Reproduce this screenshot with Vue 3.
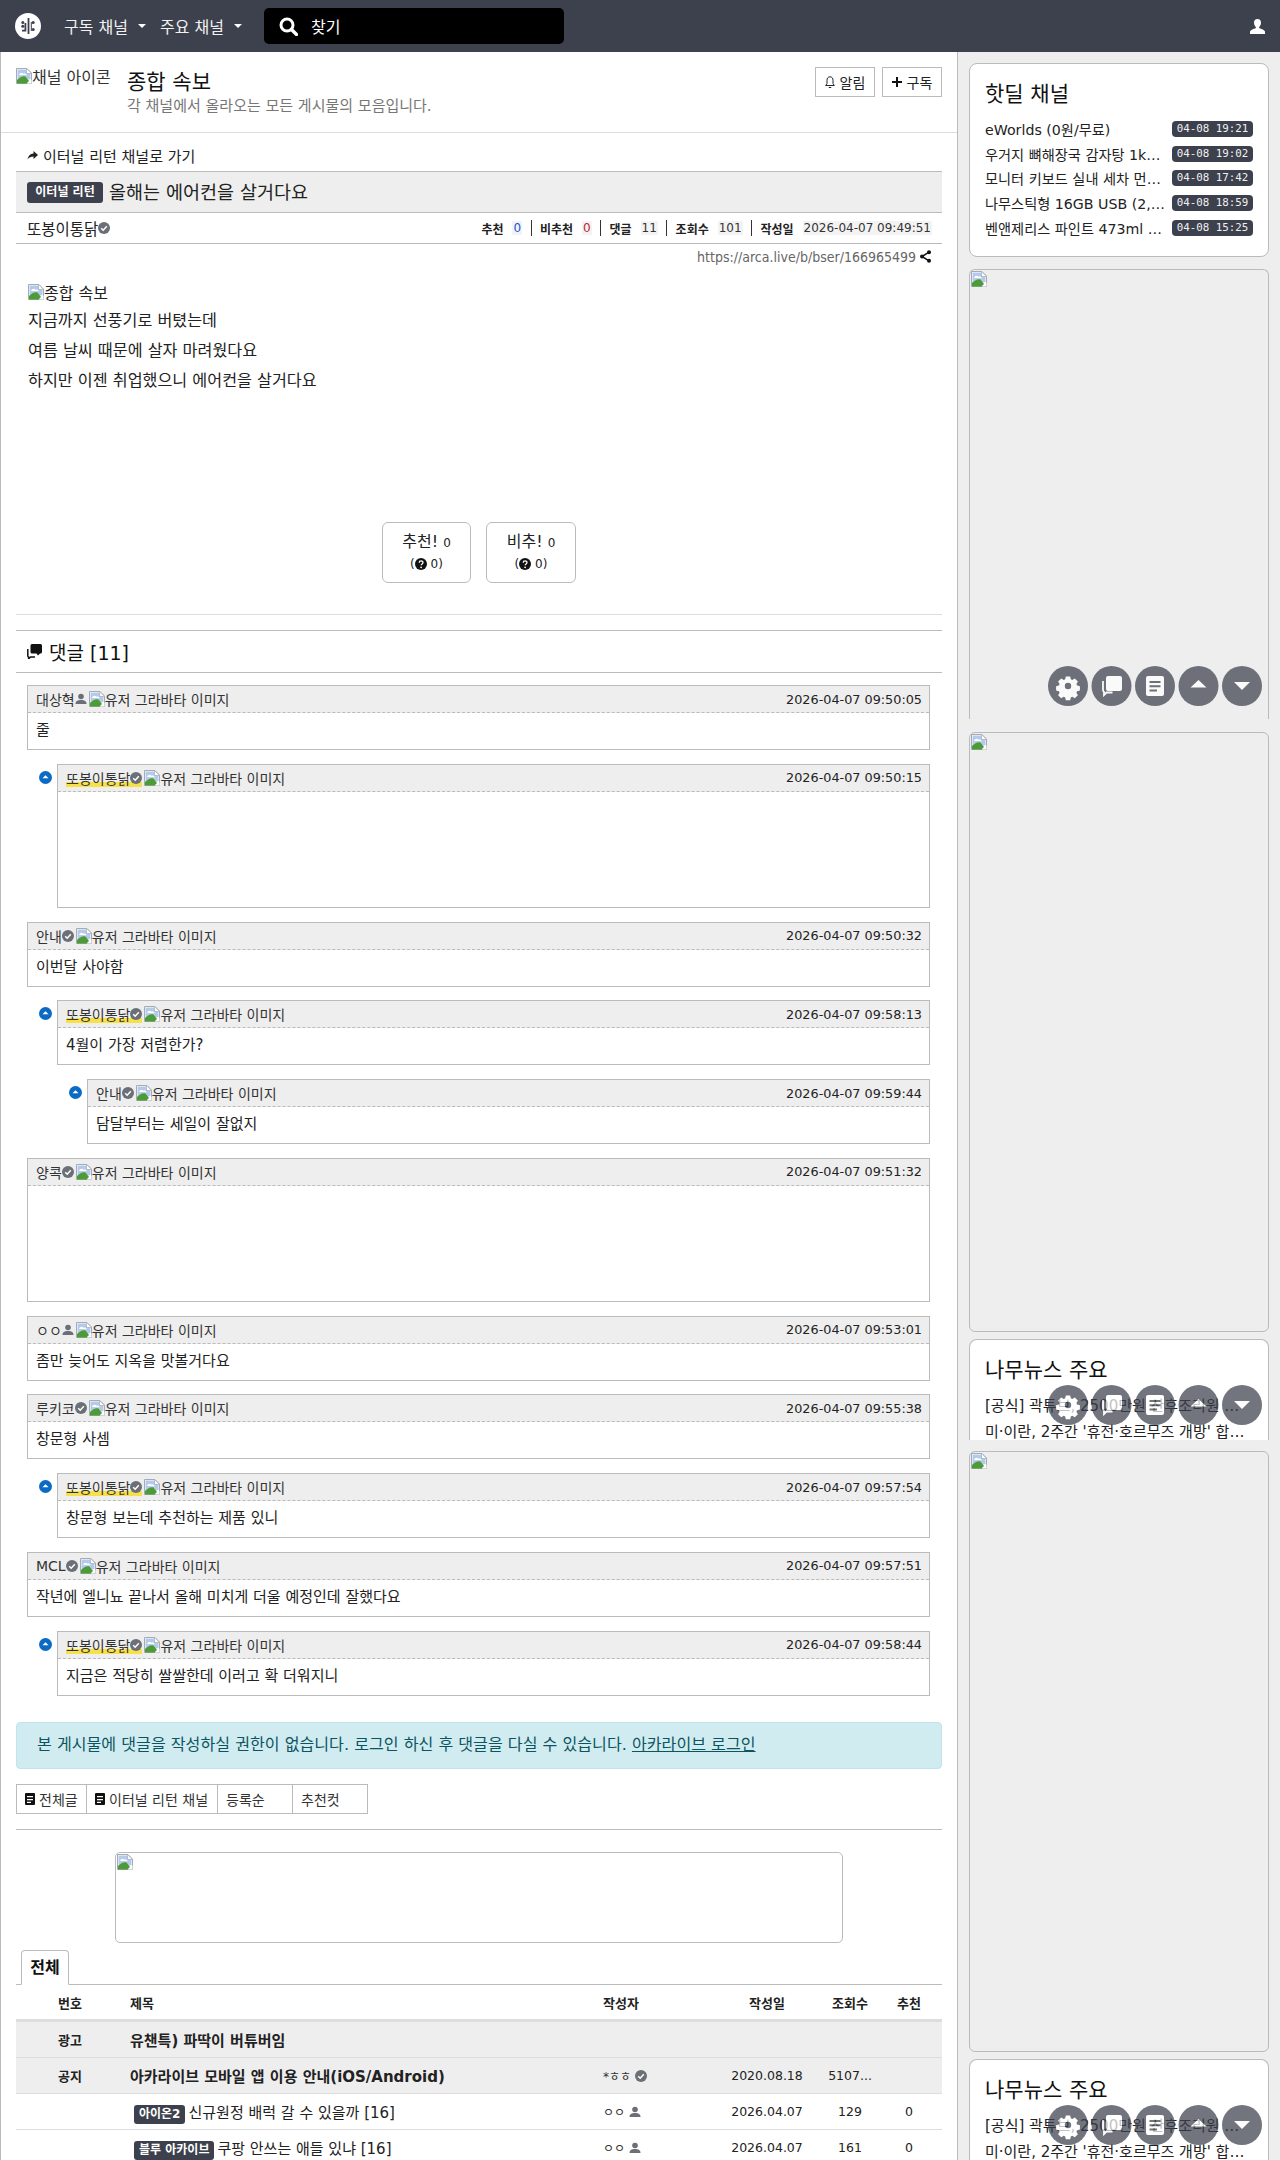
<template>
  <div class="page">
    <svg class="defs" width="0" height="0">
      <symbol id="broken" viewBox="0 0 16 16">
        <path d="M.5.500h10.500l4.500 4.500v10.500h-15z" fill="#fff" stroke="#a3abb5" stroke-width="1"/>
        <path d="M1.500 1.500h8.700l4.300 4.300v5.200l-13 3z" fill="#b4caec"/>
        <path d="M3 7c1-2.500 3-3 4.500-1.200 1.500-.5 2.800 0 3.300 1.400z" fill="#fff"/>
        <path d="M1 15.500v-3.500c3-3.200 6-4.500 8.500-3.500l3.500 4.500-2.500 2.500z" fill="#4d9b37"/>
        <path d="M10.500.500v5h5z" fill="#fff" stroke="#a3abb5" stroke-width=".7"/>
        <path d="M15.500 11.500l-4.500 4h4.500z" fill="#fff"/>
      </symbol>
      <symbol id="check" viewBox="0 0 12 12">
        <circle cx="6" cy="6" r="6" fill="#6c6f78"/>
        <path d="M3.200 6.200l2 2 3.600-4" fill="none" stroke="#fff" stroke-width="1.500"/>
      </symbol>
      <symbol id="person" viewBox="0 0 12 12">
        <circle cx="6" cy="3.500" r="2.800" fill="#6c6f78"/>
        <path d="M.5 11c0-3 2-4 5.500-4s5.500 1 5.500 4z" fill="#6c6f78"/>
      </symbol>
      <symbol id="listicon" viewBox="0 0 10 12">
        <path d="M1 0h8a1 1 0 0 1 1 1v10a1 1 0 0 1-1 1H1a1 1 0 0 1-1-1V1a1 1 0 0 1 1-1zm1 3v1.300h6V3zm0 3v1.300h6V6zm0 2.700V10h4V8.700z" fill="#111" fill-rule="evenodd"/>
      </symbol>
      <symbol id="help" viewBox="0 0 12 12">
        <circle cx="6" cy="6" r="6" fill="#111"/>
        <path d="M4.200 4.700c0-2.300 3.800-2.300 3.800-.1 0 1.400-1.900 1.300-1.900 2.700" fill="none" stroke="#fff" stroke-width="1.300"/>
        <circle cx="6.100" cy="9.300" r=".9" fill="#fff"/>
      </symbol>
      <symbol id="fabs" viewBox="0 0 214 40">
        <circle cx="20" cy="20" r="20" fill="#3d414d"/>
        <g fill="#fff" transform="translate(20 20)">
          <path d="M-2.200-9.500h4.400l.6 2.800 1.500.7 2.500-1.500 3.100 3.100-1.500 2.500.7 1.500 2.800.6v4.400l-2.800.6-.7 1.500 1.500 2.500-3.100 3.100-2.500-1.500-1.500.7-.6 2.800h-4.400l-.6-2.800-1.500-.7-2.500 1.500-3.100-3.100 1.500-2.500-.7-1.500-2.800-.6v-4.400l2.800-.6.7-1.500-1.500-2.500 3.100-3.100 2.500 1.500 1.500-.7zM0-3.200a3.200 3.200 0 1 0 0 6.400 3.200 3.200 0 0 0 0-6.400z" fill-rule="evenodd"/>
        </g>
        <circle cx="63.500" cy="20" r="20" fill="#3d414d"/>
        <path d="M60 10h12a2 2 0 0 1 2 2v11a2 2 0 0 1-2 2h-12a2 2 0 0 1-2-2v-11a2 2 0 0 1 2-2z" fill="#fff"/>
        <path d="M55 15v9a3 3 0 0 0 1 2v3l2.500-2.500h6" fill="none" stroke="#fff" stroke-width="1.800"/>
        <circle cx="107" cy="20" r="20" fill="#3d414d"/>
        <path d="M100 10h14a2 2 0 0 1 2 2v16a2 2 0 0 1-2 2h-14a2 2 0 0 1-2-2v-16a2 2 0 0 1 2-2zm1.500 5v2h11v-2zm0 4.200v2h11v-2zm0 4.200v2h7.500v-2z" fill="#fff" fill-rule="evenodd"/>
        <circle cx="150.500" cy="20" r="20" fill="#3d414d"/>
        <path d="M150.500 14l8 7.500h-16z" fill="#fff"/>
        <circle cx="194" cy="20" r="20" fill="#3d414d"/>
        <path d="M186 16h16l-8 8z" fill="#fff"/>
      </symbol>
    </svg>

    <header class="topbar">
      <svg class="logo" viewBox="0 0 26 26" width="26" height="26">
        <circle cx="13" cy="13" r="13" fill="#fff"/>
        <g fill="#3d414d">
          <rect x="12.600" y="5" width="1.800" height="16"/>
          <path d="M9.500 10h1.800v8.500H7v-1.800h2.500z"/>
          <circle cx="7.800" cy="9.500" r="1.500"/>
          <circle cx="7.800" cy="13.200" r="1.500"/>
          <circle cx="18.200" cy="9.500" r="1.500"/>
          <circle cx="18.200" cy="16.500" r="1.500"/>
          <rect x="15.800" y="9" width="1" height="9"/>
        </g>
      </svg>
      <a class="menu menu-first">구독 채널<span class="caret"></span></a>
      <a class="menu">주요 채널<span class="caret"></span></a>
      <div class="search">
        <svg width="19" height="19" viewBox="0 0 19 19"><circle cx="8" cy="8" r="6" fill="none" stroke="#fff" stroke-width="3"/><path d="M12.500 12.500l5 5" stroke="#fff" stroke-width="3.400" stroke-linecap="round"/></svg>
        <span>찾기</span>
      </div>
      <svg class="me" width="15" height="15" viewBox="0 0 15 15"><path d="M7.500 0c2.300 0 3.500 1.700 3.500 3.800 0 2-1 3.400-1.800 4.200v1.200c2.200.8 5.300 1.500 5.800 3.300v2.500H0v-2.500c.5-1.800 3.600-2.500 5.800-3.300V8C5 7.200 4 5.800 4 3.800 4 1.700 5.200 0 7.500 0z" fill="#fff"/></svg>
    </header>

    <div class="layout">
      <main class="main">
        <section class="chan">
          <div class="chan-icon"><svg class="bi"><use href="#broken"/></svg>채널 아이콘</div>
          <div class="chan-text">
            <h1>종합 속보</h1>
            <p>각 채널에서 올라오는 모든 게시물의 모음입니다.</p>
          </div>
          <div class="chan-btns">
            <button><svg width="10" height="13" viewBox="0 0 10 13"><path d="M5 .8c2 0 3 1.500 3 3.500v3.200l1.300 2H.7L2 7.500V4.300C2 2.300 3 .8 5 .8zM3.800 11.500h2.400" fill="none" stroke="#222" stroke-width="1"/></svg>알림</button>
            <button><svg width="10" height="10" viewBox="0 0 10 10"><path d="M5 0v10M0 5h10" stroke="#111" stroke-width="2"/></svg>구독</button>
          </div>
        </section>

        <div class="content">
          <a class="back"><svg width="11" height="9" viewBox="0 0 11 9"><path d="M6.500 0l4.500 4-4.500 4V5.600C4 5.600 2 6.500.5 8.500 1 5 3 2.700 6.500 2.400z" fill="#222"/></svg>이터널 리턴 채널로 가기</a>
          <div class="art-title"><span class="badge">이터널 리턴</span><span class="tt">올해는 에어컨을 살거다요</span></div>
          <div class="art-info">
            <span class="author">또봉이통닭<svg class="ic12"><use href="#check"/></svg></span>
            <div class="stats">
              <b>추천</b><i class="blue">0</i><s></s>
              <b>비추천</b><i class="red">0</i><s></s>
              <b>댓글</b><i>11</i><s></s>
              <b>조회수</b><i>101</i><s></s>
              <b>작성일</b><i class="date">2026-04-07 09:49:51</i>
            </div>
          </div>
          <div class="url">https://arca.live/b/bser/166965499<svg width="11" height="13" viewBox="0 0 11 13"><path d="M9 2.200L2 6.500l7 4.300" fill="none" stroke="#111" stroke-width="1.500"/><circle cx="9" cy="2.200" r="2" fill="#111"/><circle cx="2" cy="6.500" r="2" fill="#111"/><circle cx="9" cy="10.800" r="2" fill="#111"/></svg></div>

          <article class="body">
            <div class="alt-line"><svg class="bi"><use href="#broken"/></svg>종합 속보</div>
            <p class="l1">지금까지 선풍기로 버텼는데</p>
            <p>여름 날씨 때문에 살자 마려웠다요</p>
            <p>하지만 이젠 취업했으니 에어컨을 살거다요</p>
          </article>

          <div class="votes">
            <div class="vote v1"><div class="v-top">추천! <small>0</small></div><div class="v-bot">(<svg class="ic12"><use href="#help"/></svg> 0)</div></div>
            <div class="vote v2"><div class="v-top">비추! <small>0</small></div><div class="v-bot">(<svg class="ic12"><use href="#help"/></svg> 0)</div></div>
          </div>

          <div class="thin-rule"></div>
          <h2 class="cm-head">
            <svg width="15" height="15" viewBox="0 0 15 15"><path d="M5 0h8.500A1.500 1.500 0 0 1 15 1.500V8a1.500 1.500 0 0 1-1.500 1.500H13L11 11.500 9.500 9.500H5A1.500 1.500 0 0 1 3.500 8V1.500A1.500 1.500 0 0 1 5 0z" fill="#111"/><path d="M.8 5v7a1 1 0 0 0 .8 1v1.800l2-1.800H8" fill="none" stroke="#111" stroke-width="1.500"/></svg>
            댓글 [11]
          </h2>

          <div class="comments">
            <div v-for="(c, i) in comments" :key="i" class="cm-row" :class="'depth' + c.depth">
              <span v-if="c.depth" class="reply-dot"><svg width="13" height="13" viewBox="0 0 13 13"><circle cx="6.500" cy="6.500" r="6.500" fill="#0b6bc4"/><path d="M6.500 4.200l3 3h-6z" fill="#fff"/></svg></span>
              <div class="cm">
                <div class="cm-top">
                  <span class="cm-user">
                    <span class="who" :class="{ hl: c.hl }">{{ c.name }}<svg class="ic12"><use :href="c.check ? '#check' : '#person'"/></svg></span>
                    <span class="grav"><svg class="bi"><use href="#broken"/></svg>유저 그라바타 이미지</span>
                  </span>
                  <time>{{ c.time }}</time>
                </div>
                <div class="cm-body" :class="{ tall: c.tall }">{{ c.text }}</div>
              </div>
            </div>
          </div>

          <div class="alert">본 게시물에 댓글을 작성하실 권한이 없습니다. 로그인 하신 후 댓글을 다실 수 있습니다. <a>아카라이브 로그인</a></div>

          <div class="tools">
            <a class="w70"><svg width="10" height="12"><use href="#listicon"/></svg>전체글</a>
            <a class="w131"><svg width="10" height="12"><use href="#listicon"/></svg>이터널 리턴 채널</a>
            <a class="w75">등록순</a>
            <a class="w75">추천컷</a>
          </div>
          <div class="tool-rule"></div>

          <div class="ad"><svg class="bi"><use href="#broken"/></svg></div>

          <div class="tabs"><span class="tab">전체</span></div>
          <div class="table">
            <div class="tr th">
              <span class="c-no">번호</span><span class="c-title">제목</span><span class="c-auth">작성자</span><span class="c-date">작성일</span><span class="c-view">조회수</span><span class="c-rec">추천</span>
            </div>
            <div class="tr gray strong">
              <span class="c-no">광고</span><span class="c-title">유챈특) 파딱이 버튜버임</span>
            </div>
            <div class="tr gray strong notice">
              <span class="c-no">공지</span><span class="c-title">아카라이브 모바일 앱 이용 안내(iOS/Android)</span>
              <span class="c-auth au">*ㅎㅎ <svg class="ic12"><use href="#check"/></svg></span><span class="c-date norm">2020.08.18</span><span class="c-view norm">5107...</span>
            </div>
            <div v-for="r in rows" :key="r.title" class="tr">
              <span class="c-no"></span>
              <span class="c-title plain"><em class="tag">{{ r.tag }}</em>{{ r.title }} [{{ r.cnt }}]</span>
              <span class="c-auth au">ㅇㅇ <svg class="ic12"><use href="#person"/></svg></span>
              <span class="c-date">2026.04.07</span><span class="c-view">{{ r.view }}</span><span class="c-rec">0</span>
            </div>
          </div>
        </div>
      </main>

      <aside class="side">
        <div class="card hot">
          <h3>핫딜 채널</h3>
          <div v-for="d in deals" :key="d.t" class="deal"><span class="d-t">{{ d.t }}</span><time>{{ d.d }}</time></div>
        </div>

        <div class="slot s2">
          <svg class="bi"><use href="#broken"/></svg>
          <svg class="fab f2" width="214" height="40"><use href="#fabs"/></svg>
        </div>
        <div class="slot s3"><svg class="bi"><use href="#broken"/></svg></div>

        <div class="card news n1">
          <h3>나무뉴스 주요</h3>
          <div v-for="t in news" :key="t" class="news-line">{{ t }}</div>
          <svg class="fab f4" width="214" height="40"><use href="#fabs"/></svg>
        </div>

        <div class="slot s5"><svg class="bi"><use href="#broken"/></svg></div>

        <div class="card news n2">
          <h3>나무뉴스 주요</h3>
          <div v-for="t in news" :key="t" class="news-line">{{ t }}</div>
          <svg class="fab f4" width="214" height="40"><use href="#fabs"/></svg>
        </div>
      </aside>
    </div>
  </div>
</template>

<script setup>
const comments = [
  { name: '대상혁', check: false, time: '2026-04-07 09:50:05', text: '줄', depth: 0 },
  { name: '또봉이통닭', check: true, hl: true, time: '2026-04-07 09:50:15', text: '', depth: 1, tall: true },
  { name: '안내', check: true, time: '2026-04-07 09:50:32', text: '이번달 사야함', depth: 0 },
  { name: '또봉이통닭', check: true, hl: true, time: '2026-04-07 09:58:13', text: '4월이 가장 저렴한가?', depth: 1 },
  { name: '안내', check: true, time: '2026-04-07 09:59:44', text: '담달부터는 세일이 잘없지', depth: 2 },
  { name: '양콕', check: true, time: '2026-04-07 09:51:32', text: '', depth: 0, tall: true },
  { name: 'ㅇㅇ', check: false, time: '2026-04-07 09:53:01', text: '좀만 늦어도 지옥을 맛볼거다요', depth: 0 },
  { name: '루키코', check: true, time: '2026-04-07 09:55:38', text: '창문형 사셈', depth: 0 },
  { name: '또봉이통닭', check: true, hl: true, time: '2026-04-07 09:57:54', text: '창문형 보는데 추천하는 제품 있니', depth: 1 },
  { name: 'MCL', check: true, time: '2026-04-07 09:57:51', text: '작년에 엘니뇨 끝나서 올해 미치게 더울 예정인데 잘했다요', depth: 0 },
  { name: '또봉이통닭', check: true, hl: true, time: '2026-04-07 09:58:44', text: '지금은 적당히 쌀쌀한데 이러고 확 더워지니', depth: 1 }
]

const deals = [
  { t: 'eWorlds (0원/무료)', d: '04-08 19:21' },
  { t: '우거지 뼈해장국 감자탕 1kg 3팩 (12,900원)', d: '04-08 19:02' },
  { t: '모니터 키보드 실내 세차 먼지 제거 브러시', d: '04-08 17:42' },
  { t: '나무스틱형 16GB USB (2,900원/무배)', d: '04-08 18:59' },
  { t: '벤앤제리스 파인트 473ml 아이스크림 (9,900원)', d: '04-08 15:25' }
]

const news = [
  '[공식] 곽튜브, 2500만원 산후조리원 협찬 논란 사과',
  "미·이란, 2주간 '휴전·호르무즈 개방' 합의 발표"
]

const rows = [
  { tag: '아이온2', title: '신규원정 배럭 갈 수 있을까', cnt: 16, view: 129 },
  { tag: '블루 아카이브', title: '쿠팡 안쓰는 애들 있냐', cnt: 16, view: 161 }
]
</script>

<style>
html, body { margin: 0; background: #fff; }
</style>

<style scoped>
.page {
  width: 1280px;
  height: 2160px;
  overflow: hidden;
  font-family: "DejaVu Sans", "Noto Sans CJK KR", sans-serif;
  font-size: 14px;
  color: #222;
  background: #eee;
}
.defs { position: absolute; }
.bi { width: 16px; height: 16px; vertical-align: top; flex: none; }
.ic12 { width: 12px; height: 12px; vertical-align: -1px; flex: none; }

.topbar {
  height: 52px;
  background: #3d414d;
  display: flex;
  align-items: center;
  padding-left: 15px;
  color: #fff;
}
.menu { font-size: 16px; color: #f2f2f2; margin-right: 14px; display: flex; align-items: center; }
.menu-first { margin-left: 23px; }
.caret { width: 0; height: 0; margin-left: 10px; border: 4px solid transparent; border-top-color: #fff; border-bottom: 0; }
.search {
  width: 300px;
  height: 36px;
  margin-left: 8px;
  background: #000;
  border-radius: 5px;
  display: flex;
  align-items: center;
  gap: 13px;
  padding-left: 15px;
  box-sizing: border-box;
  font-size: 16px;
}
.me { margin-left: auto; margin-right: 15px; }

.layout { display: flex; align-items: flex-start; }
.main {
  width: 958px;
  height: 2108px;
  box-sizing: border-box;
  background: #fff;
  border-left: 1px solid #bbb;
  border-right: 1px solid #bbb;
  flex: none;
}
.chan {
  height: 81px;
  box-sizing: border-box;
  border-bottom: 1px solid #ddd;
  display: flex;
  padding: 15px 15px 0 15px;
}
.chan-icon { width: 95px; height: 20px; margin-top: 1px; overflow: hidden; white-space: nowrap; font-size: 16px; line-height: 20px; color: #333; margin-right: 16px; display: flex; }
.chan-text { padding-top: 1px; }
.chan-text h1 { margin: 0; font-size: 21px; font-weight: 400; line-height: 28px; color: #111; }
.chan-text p { margin: 1px 0 0; font-size: 15px; color: #777; line-height: 19px; }
.chan-btns { margin-left: auto; display: flex; gap: 7px; }
.chan-btns button {
  height: 30px;
  width: 60px;
  padding: 0;
  background: #fff;
  border: 1px solid #bbb;
  font: inherit;
  font-size: 14px;
  color: #222;
  display: flex;
  align-items: center;
  justify-content: center;
  gap: 5px;
}
.content { padding: 0 15px; }
.back { height: 38px; display: flex; align-items: center; gap: 5px; padding-left: 11px; font-size: 15px; color: #222; box-sizing: border-box; padding-top: 7px; }
.art-title {
  height: 42px;
  box-sizing: border-box;
  background: #eee;
  border-top: 1px solid #bbb;
  border-bottom: 1px solid #bbb;
  display: flex;
  align-items: center;
  padding-left: 11px;
  gap: 6px;
}
.badge { background: #3d414d; color: #fff; font-size: 12px; font-weight: 700; height: 21px; line-height: 21px; width: 76px; text-align: center; border-radius: 3px; }
.tt { font-size: 18.500px; color: #222; margin-top: -3px; }
.art-info {
  height: 31px;
  box-sizing: border-box;
  border-bottom: 1px solid #bbb;
  display: flex;
  align-items: center;
  justify-content: space-between;
  padding: 0 11px;
  font-size: 15.500px;
}
.author { display: flex; align-items: center; }
.stats { display: flex; align-items: center; font-size: 12px; margin-right: -1px; }
.stats b { font-weight: 700; margin-right: 9px; }
.stats i { font-style: normal; background: #f3f3f3; padding: 0 1px; color: #333; }
.stats .blue { color: #1a56d6; }
.stats .red { color: #c0272d; }
.stats s { width: 1px; height: 16px; background: #333; margin: 0 8.400px; text-decoration: none; }
.url { height: 25px; display: flex; justify-content: flex-end; align-items: center; gap: 4px; padding-right: 11px; font-size: 14px; color: #666; font-stretch: condensed; }

.body { padding: 15px 12px 0; height: 253px; box-sizing: border-box; }
.alt-line { display: flex; font-size: 16px; line-height: 19px; }
.body p { margin: 0 0 7px; font-size: 16.200px; line-height: 23px; }
.body .l1 { margin-top: 6px; }
.votes { display: flex; justify-content: flex-start; height: 61px; padding-left: 366px; }
.vote { width: 89px; height: 61px; box-sizing: border-box; border: 1px solid #bbb; border-radius: 6px; text-align: center; color: #222; }
.v2 { width: 90px; margin-left: 15px; }
.v-top { font-size: 16px; line-height: 20px; margin-top: 9px; }
.v-top small { font-size: 12px; }
.v-bot { font-size: 12px; line-height: 14px; margin-top: 4px; }
.v-bot .ic12 { vertical-align: -2px; }
.thin-rule { height: 1px; background: #ddd; margin-top: 31px; }
.cm-head {
  margin: 15px 0 0;
  height: 43px;
  box-sizing: border-box;
  border-top: 1px solid #bbb;
  border-bottom: 1px solid #bbb;
  font-size: 19px;
  font-weight: 400;
  display: flex;
  align-items: center;
  gap: 7px;
  padding-left: 11px;
  color: #111;
}
.comments { padding-top: 12px; }
.cm-row { display: flex; margin-bottom: 13.750px; position: relative; padding-right: 12px; }
.depth0 { padding-left: 11px; }
.depth1 { padding-left: 41px; }
.depth2 { padding-left: 71px; }
.reply-dot { position: absolute; top: 7px; margin-left: -18px; line-height: 0; }
.cm { flex: 1; border: 1px solid #bbb; }
.cm-top {
  height: 27px;
  box-sizing: border-box;
  background: #eee;
  border-bottom: 1px dashed #bbb;
  display: flex;
  align-items: center;
  justify-content: space-between;
  padding: 0 7px 0 8px;
  font-size: 12.800px;
}
.cm-user { display: flex; align-items: center; color: #333; }
.who { display: inline-flex; align-items: center; font-size: 14px; height: 18px; }
.hl { background: linear-gradient(transparent 72%, #f7e14a 72%); }
.grav { display: inline-flex; margin-left: 2px; align-items: center; font-size: 14px; color: #333; }
.cm-body { height: 36px; line-height: 35px; padding-left: 8px; font-size: 15px; color: #222; }
.cm-body.tall { height: 115px; }

.alert {
  margin-top: 26.500px;
  height: 47px;
  box-sizing: border-box;
  background: #d1ecf1;
  border: 1px solid #bee5eb;
  border-radius: 4px;
  color: #0c5460;
  font-size: 16.100px;
  line-height: 44px;
  padding-left: 20px;
}
.alert a { text-decoration: underline; }
.tools { display: flex; margin-top: 15px; height: 30px; }
.tools a {
  box-sizing: border-box;
  height: 30px;
  border: 1px solid #bbb;
  margin-right: -1px;
  display: flex;
  align-items: center;
  gap: 4px;
  padding-left: 8px;
  font-size: 14px;
  color: #333;
}
.w70 { width: 71px; }
.w131 { width: 132px; }
.w75 { width: 76px; }
.tool-rule { height: 1px; background: #bbb; margin-top: 15px; }
.ad { width: 728px; height: 91px; box-sizing: border-box; margin: 22px 0 0 99px; border: 1px solid #bbb; border-radius: 5px; overflow: hidden; line-height: 0; padding: 1px; }
.tabs { height: 42px; border-bottom: 1px solid #bbb; box-sizing: border-box; padding: 0 0 0 5px; display: flex; align-items: flex-end; }
.tab { width: 48px; height: 35px; margin-bottom: -1px; box-sizing: border-box; background: #fff; border: 1px solid #bbb; border-bottom-color: #fff; border-radius: 4px 4px 0 0; text-align: center; font-size: 16px; font-weight: 700; line-height: 33px; color: #111; }
.table { font-size: 13px; }
.tr { display: flex; align-items: center; height: 36px; border-bottom: 1px solid #ddd; box-sizing: border-box; }
.tr.th { height: 37px; border-bottom: 3px solid #ddd; font-size: 13px; font-weight: 700; }
.gray { background: #eee; }
.strong { font-weight: 700; }
.norm { font-weight: 400; }
.c-no { width: 108px; flex: none; text-align: center; font-size: 13px; font-weight: 700; }
.c-title { width: 472px; flex: none; padding-left: 6px; box-sizing: border-box; white-space: nowrap; }
.strong .c-title { font-size: 15px; }
.th .c-title { font-size: 13px; }
.c-title.plain { padding-left: 10px; font-size: 15px; }
.tag { font-style: normal; background: #3d414d; color: #fff; font-size: 12px; font-weight: 700; border-radius: 3px; padding: 2px 5px 3px; margin-right: 3px; }
.c-auth { width: 116px; flex: none; padding-left: 7px; box-sizing: border-box; }
.au { font-size: 12px; font-weight: 400; color: #333; white-space: nowrap; }
.c-date { width: 110px; flex: none; text-align: center; font-size: 12.500px; }
.th .c-date { font-size: 13px; }
.c-view { width: 56px; flex: none; text-align: center; font-size: 12.500px; white-space: nowrap; }
.th .c-view { font-size: 13px; }
.c-rec { width: 62px; flex: none; text-align: center; font-size: 12.500px; }
.th .c-rec { font-size: 13px; }

.side { width: 322px; flex: none; box-sizing: border-box; padding: 11px 0 0 11px; }
.card { width: 300px; box-sizing: border-box; background: #fff; border: 1px solid #bbb; border-radius: 8px; padding: 0 15px; position: relative; }
.card h3 { margin: 0; font-size: 21px; font-weight: 400; color: #111; line-height: 24px; padding-top: 18px; }
.hot { height: 194px; margin-bottom: 12px; }
.deal { display: flex; align-items: center; height: 24.600px; font-size: 14.200px; color: #222; justify-content: space-between; gap: 3px; }
.hot h3 { margin-bottom: 11px; }
.d-t { flex: 1; min-width: 0; white-space: nowrap; overflow: hidden; text-overflow: ellipsis; }
.deal time { flex: none; width: 81px; height: 16px; line-height: 15px; background: #3d414d; color: #f0f0f0; border-radius: 4px; text-align: center; font-family: "DejaVu Sans Mono", monospace; font-size: 10.800px; }
.slot { width: 300px; box-sizing: border-box; border: 1px solid #bbb; border-radius: 6px; position: relative; line-height: 0; padding: 1px; }
.s2 { height: 450px; margin-bottom: 13px; border-bottom: 0; border-radius: 6px 6px 0 0; }
.s3 { height: 600px; margin-bottom: 7px; }
.s5 { height: 601px; margin-bottom: 7px; }
.news { border-bottom: 0; border-radius: 8px 8px 0 0; overflow: hidden; }
.n1 { height: 101px; margin-bottom: 11px; }
.n2 { height: 101px; }
.news h3 { margin-bottom: 11px; }
.news-line { height: 26px; line-height: 26px; font-size: 15px; white-space: nowrap; overflow: hidden; text-overflow: ellipsis; color: #222; }
.fab { position: absolute; opacity: .72; right: 6px; }
.f2 { top: 396px; }
.f4 { top: 45px; }
</style>
